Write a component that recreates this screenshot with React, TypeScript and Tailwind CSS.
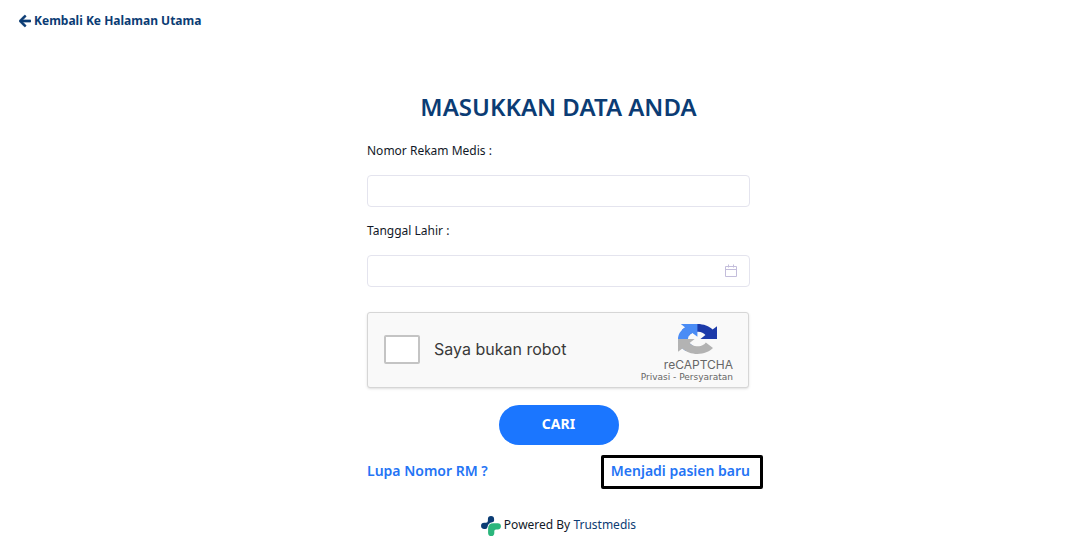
import React from "react";

function ArrowLeft() {
  return (
    <svg viewBox="0 0 448 512" className="h-[14px] w-[12px]" fill="currentColor" stroke="currentColor" strokeWidth="24" aria-hidden="true">
      <path d="M257.5 445.1l-22.2 22.2c-9.4 9.4-24.6 9.4-33.9 0L7 273c-9.4-9.4-9.4-24.6 0-33.9L201.4 44.7c9.4-9.4 24.6-9.4 33.9 0l22.2 22.2c9.5 9.5 9.3 25-.4 34.3L136.6 216H424c13.3 0 24 10.7 24 24v32c0 13.3-10.7 24-24 24H136.6l120.5 114.8c9.8 9.3 10 24.8.4 34.3z" />
    </svg>
  );
}

function CalendarIcon() {
  return (
    <svg viewBox="0 0 14 14" className="size-[14px]" fill="none" stroke="#c3bddb" aria-hidden="true">
      <path d="M1.5 2.5h11v10h-11zM1.5 5.5h11M4.5 0.5v3M9.5 0.5v3" />
    </svg>
  );
}

function CaptchaLogo() {
  return (
    <svg viewBox="0 0 64 64" preserveAspectRatio="none" className="h-[30px] w-[39px]" aria-hidden="true">
      <path fill="#1c3aa9" d="M64 31.955l-.033-1.37V4.687l-7.16 7.16C50.948 4.674 42.033.093 32.05.093c-10.4 0-19.622 4.96-25.458 12.64l11.736 11.86a15.55 15.55 0 0 1 4.754-5.334c2.05-1.6 4.952-2.906 8.968-2.906.485 0 .86.057 1.135.163 4.976.393 9.288 3.14 11.828 7.124l-8.307 8.307L64 31.953" />
      <path fill="#4a8cf5" d="M31.862.094l-1.37.033H4.594l7.16 7.16C4.58 13.147 0 22.06 0 32.046c0 10.4 4.96 19.622 12.64 25.458L24.5 45.768a15.55 15.55 0 0 1-5.334-4.754c-1.6-2.05-2.906-4.952-2.906-8.968 0-.485.057-.86.163-1.135.393-4.976 3.14-9.288 7.124-11.828l8.307 8.307L31.86.095" />
      <path fill="#b3b3b3" d="M.001 32.045l.033 1.37v25.898l7.16-7.16c5.86 7.173 14.774 11.754 24.76 11.754 10.4 0 19.622-4.96 25.458-12.64l-11.736-11.86a15.55 15.55 0 0 1-4.754 5.334c-2.05 1.6-4.952 2.906-8.968 2.906-.485 0-.86-.057-1.135-.163-4.976-.393-9.288-3.14-11.828-7.124l8.307-8.307c-10.522.04-22.4.066-27.295-.005" />
    </svg>
  );
}

function TrustmedisLogo() {
  return (
    <svg viewBox="0 0 20 20" className="size-[20px]" aria-hidden="true">
      <path fill="#0b3c74" d="M10 0a3.1 3.1 0 0 1 3.1 3.1V4.6Q13.1 6.2 11.2 6.3Q7.2 6.8 6.5 11Q6.2 13 4.4 13H3.2a3.1 3.1 0 0 1 0-6.3H5Q6.9 6.7 6.9 4.8V3.1A3.1 3.1 0 0 1 10 0Z" />
      <path fill="#2bb67c" d="M12.6 7.2H16.8a3.1 3.1 0 0 1 0 6.2H15Q13.3 13.4 13.3 15V16.9a3.1 3.1 0 0 1-6.2 0V12.6Q7.1 7.2 12.6 7.2Z" />
    </svg>
  );
}

const field =
  "block h-8 w-full rounded-[4px] border border-[#e4e4ee] bg-white px-3 text-xs text-gray-900 outline-none focus:border-[#1b76ff]";

export default function App() {
  return (
    <div className="bg-white font-['Noto_Sans',sans-serif] text-xs leading-5 text-[#111827]">
      <header className="flex px-[19px] pt-[11px]">
        <a href="#" className="flex items-center gap-[3px] leading-5 font-bold text-[#0b3c74]">
          <ArrowLeft />
          Kembali Ke Halaman Utama
        </a>
      </header>

      <main className="pl-[46px]">
        <div className="mx-auto w-full max-w-[383px] pt-[60px]">
          <form onSubmit={(e) => e.preventDefault()}>
            <h1 className="text-center text-2xl font-semibold text-[#0b3c74]">MASUKKAN DATA ANDA</h1>

            <label htmlFor="rm" className="mt-[18px] block leading-5">
              Nomor Rekam Medis :
            </label>
            <input id="rm" type="text" className={`mt-[14px] ${field}`} />

            <label htmlFor="lahir" className="mt-[14px] block leading-5">
              Tanggal Lahir :
            </label>
            <div className="relative mt-[14px]">
              <input id="lahir" type="text" className={field} />
              <span className="pointer-events-none absolute inset-y-0 right-3 flex items-center">
                <CalendarIcon />
              </span>
            </div>

            <div className="mt-[25px] mr-px flex h-[76px] items-center justify-between rounded-[3px] border border-[#d6d6d6] bg-[#f9f9f9] pr-[15px] pb-[2px] pl-4 shadow-sm">
              <div className="flex items-center gap-[14px]">
                <input
                  id="robot"
                  type="checkbox"
                  className="h-[29px] w-9 appearance-none rounded-[2px] border-2 border-[#c4c4c4] bg-white checked:bg-[#1b76ff]"
                />
                <label htmlFor="robot" className="font-['Inter',sans-serif] text-base text-[#3a3a3a]">
                  Saya bukan robot
                </label>
              </div>
              <div className="flex flex-col items-end pt-[8px] text-[#666666]">
                <div className="pr-[16px]">
                  <CaptchaLogo />
                </div>
                <span className="mt-[4px] font-['Inter',sans-serif] text-[12px] leading-[14px]">reCAPTCHA</span>
                <span className="font-['DejaVu_Sans',sans-serif] text-[9px] leading-[10px]">
                  <a href="#">Privasi</a> - <a href="#">Persyaratan</a>
                </span>
              </div>
            </div>

            <button
              type="submit"
              className="mx-auto mt-[17px] block h-10 w-[120px] rounded-full bg-[#1b76ff] pb-[2px] text-sm font-bold text-white"
            >
              CARI
            </button>
          </form>

          <div className="-mr-[13px] mt-[10px] flex items-center justify-between text-sm font-semibold text-[#2474f5]">
            <a href="#" className="pb-[2px]">
              Lupa Nomor RM ?
            </a>
            <a href="#" className="rounded-[2px] border-3 border-black pt-[3px] pr-[10px] pb-[5px] pl-[7px]">
              Menjadi pasien baru
            </a>
          </div>

          <footer className="mt-[26px] flex items-center justify-center gap-[3px]">
            <TrustmedisLogo />
            <p className="pb-[2px]">
              Powered By{" "}
              <a href="#" className="text-[#0b3c74]">
                Trustmedis
              </a>
            </p>
          </footer>
        </div>
      </main>
    </div>
  );
}
